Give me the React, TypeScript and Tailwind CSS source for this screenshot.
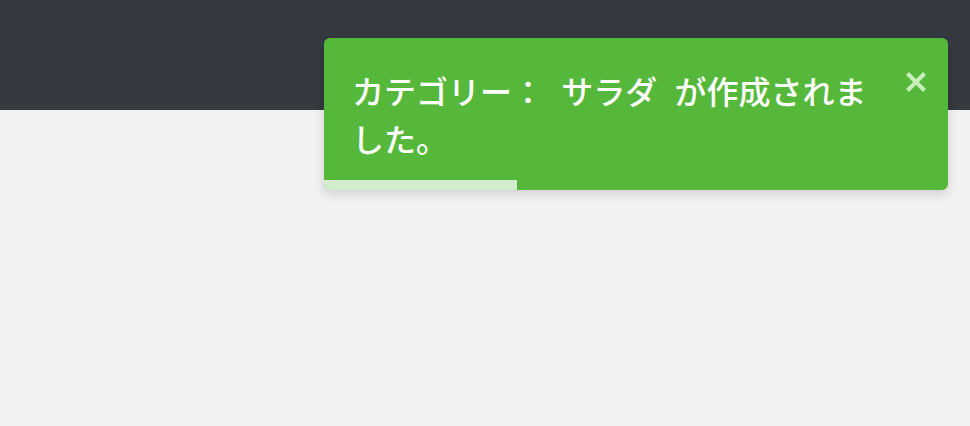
import React from "react";

export default function App() {
  return (
    <div
      className="relative w-[970px] h-[426px] bg-[#f2f2f2] overflow-hidden"
      style={{ fontFamily: '"Noto Sans CJK JP", "Noto Sans", sans-serif' }}
    >
      <div className="h-[110px] bg-[#343a40]" />
      <div className="absolute top-[38px] right-[22px] w-[624px] rounded-md bg-[#56b83b] overflow-hidden shadow-[0_4px_12px_rgba(0,0,0,0.15)]">
        <div className="pt-[28px] pb-[18px] pl-[28px] pr-[80px] text-[32px] leading-[48px] text-white font-medium [word-spacing:10px]">
          カテゴリー： サラダ が作成されました。
        </div>
        <div className="h-[10px] w-[193px] bg-[#d3eccb]" />
        <button className="absolute top-[33px] right-[21px] w-[22px] h-[22px] flex items-center justify-center">
          <svg width="22" height="22" viewBox="0 0 22 22">
            <path
              d="M2.5 2.5 L19.5 19.5 M19.5 2.5 L2.5 19.5"
              stroke="#c9edbd"
              strokeWidth="4"
              strokeLinecap="butt"
            />
          </svg>
        </button>
      </div>
    </div>
  );
}
